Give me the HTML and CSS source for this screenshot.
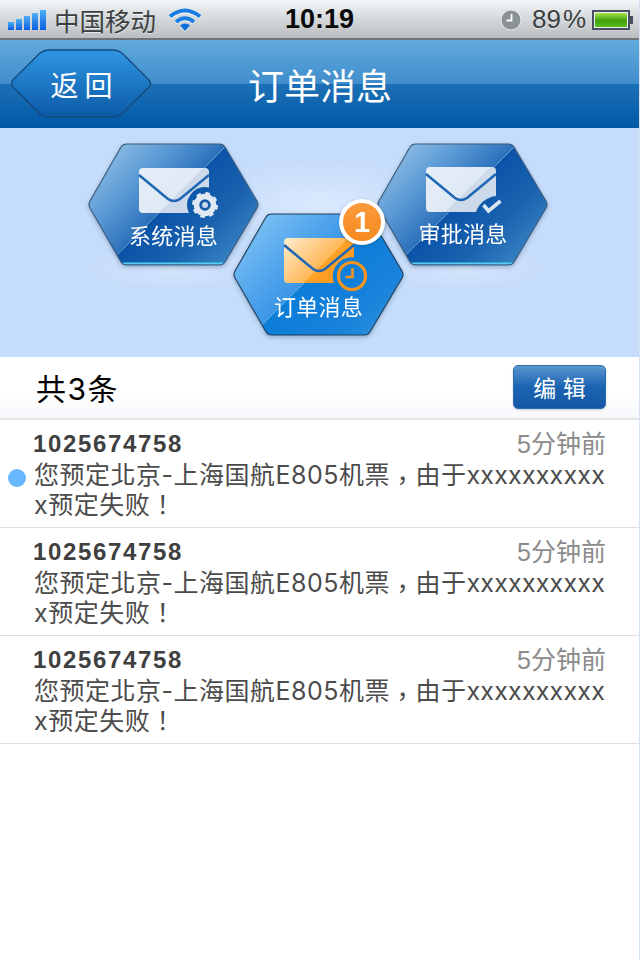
FILE: index.html
```html
<!DOCTYPE html>
<html>
<head>
<meta charset="utf-8">
<title>订单消息</title>
<link rel="stylesheet" href="styles.css">
</head>
<body>
<svg class="defs" width="0" height="0">
  <defs>
    <linearGradient id="hexBlue" gradientUnits="userSpaceOnUse" x1="0" y1="0" x2="141" y2="141">
      <stop offset="0" stop-color="#a5cdea"/>
      <stop offset=".3" stop-color="#5b9ad5"/>
      <stop offset=".5" stop-color="#2c70ba"/>
      <stop offset=".5" stop-color="#0a53a8"/>
      <stop offset=".72" stop-color="#1a62ae"/>
      <stop offset="1" stop-color="#418fcc"/>
    </linearGradient>
    <linearGradient id="hexCyan" gradientUnits="userSpaceOnUse" x1="0" y1="0" x2="141" y2="141">
      <stop offset="0" stop-color="#8ccdf6"/>
      <stop offset=".3" stop-color="#5aaaee"/>
      <stop offset=".5" stop-color="#3a96e6"/>
      <stop offset=".5" stop-color="#0c7ed8"/>
      <stop offset=".75" stop-color="#1580da"/>
      <stop offset="1" stop-color="#2e93df"/>
    </linearGradient>
    <radialGradient id="glowTop" cx=".5" cy="0" r=".5">
      <stop offset="0" stop-color="#62d2ee" stop-opacity=".95"/>
      <stop offset="1" stop-color="#62d2ee" stop-opacity="0"/>
    </radialGradient>
    <radialGradient id="glowBottom" cx=".5" cy="1" r=".5">
      <stop offset="0" stop-color="#1fb8ea" stop-opacity=".9"/>
      <stop offset="1" stop-color="#1fb8ea" stop-opacity="0"/>
    </radialGradient>
    <linearGradient id="mailLight" gradientUnits="userSpaceOnUse" x1="0" y1="0" x2="67" y2="67">
      <stop offset="0" stop-color="#e6eef8"/>
      <stop offset=".5" stop-color="#dfe9f4"/>
      <stop offset=".5" stop-color="#cddaea"/>
      <stop offset="1" stop-color="#c9d8ea"/>
    </linearGradient>
    <linearGradient id="mailOrange" gradientUnits="userSpaceOnUse" x1="0" y1="0" x2="67" y2="67">
      <stop offset="0" stop-color="#ffefd2"/>
      <stop offset=".5" stop-color="#ffb858"/>
      <stop offset=".5" stop-color="#fda22a"/>
      <stop offset="1" stop-color="#fb8a0a"/>
    </linearGradient>
    <linearGradient id="backFill" x1="0" y1="0" x2="0" y2="1">
      <stop offset="0" stop-color="#2f96e3"/>
      <stop offset="1" stop-color="#0c5aa6"/>
    </linearGradient>
    <linearGradient id="battFill" x1="0" y1="0" x2="0" y2="1">
      <stop offset="0" stop-color="#a4e64a"/>
      <stop offset=".55" stop-color="#3f9f0a"/>
      <stop offset="1" stop-color="#57c017"/>
    </linearGradient>
    <linearGradient id="barFill" x1="0" y1="0" x2="0" y2="1">
      <stop offset="0" stop-color="#4fb0f5"/>
      <stop offset="1" stop-color="#0a5fe0"/>
    </linearGradient>
    <path id="hexShape" d="M38.500 1H131.500Q135 1 137 4L169 58Q171 62 169 65L137 119Q135 122 131.500 122H38.500Q35 122 33 119L2 65Q0 62 2 58L33 4Q35 1 38.500 1Z"/>
    <clipPath id="hexClip"><use href="#hexShape"/></clipPath>
  </defs>
</svg>

<header class="status-bar">
  <div class="status-left">
    <svg class="signal" width="40" height="24" viewBox="0 0 40 24">
      <rect x="0" y="14" width="6" height="8" fill="url(#barFill)"/>
      <rect x="8" y="11" width="6" height="11" fill="url(#barFill)"/>
      <rect x="16" y="8" width="6" height="14" fill="url(#barFill)"/>
      <rect x="24" y="5" width="6" height="17" fill="url(#barFill)"/>
      <rect x="32" y="2" width="6" height="20" fill="url(#barFill)"/>
    </svg>
    <span class="carrier">中国移动</span>
    <svg class="wifi" width="34" height="25" viewBox="0 0 34 25">
      <g fill="none" stroke="#1a7de2" stroke-width="4">
        <path d="M2 9.500 Q17 -2.500 32 9.500"/>
        <path d="M8 15 Q17 7.500 26 15"/>
      </g>
      <path d="M12 18.500 Q17 14.500 22 18.500 L17 24 Z" fill="#0f6edb"/>
    </svg>
  </div>
  <span class="clock">10:19</span>
  <div class="status-right">
    <svg class="alarm" width="22" height="22" viewBox="0 0 22 22">
      <circle cx="11" cy="11" r="10" fill="#8b9295" stroke="#e8eaeb" stroke-width="1"/>
      <path d="M11.500 5v6.500H6.500" fill="none" stroke="#fff" stroke-width="1.800"/>
    </svg>
    <span class="battery-text">89<span class="pct">%</span></span>
    <svg class="battery" width="42" height="22" viewBox="0 0 42 22">
      <rect x="1" y="2" width="36" height="18" fill="#eef0f1" stroke="#474f60" stroke-width="2"/>
      <rect x="3" y="4" width="32" height="14" fill="url(#battFill)"/>
      <path d="M38 7h3v8h-3z" fill="#474f60"/>
    </svg>
  </div>
</header>

<nav class="nav-bar">
  <button class="back-btn">
    <svg class="back-shape" width="142" height="70" viewBox="0 0 142 70">
      <path d="M39 1H103Q108 1 112 4L139 31Q142 35 139 38L112 65Q108 68 103 68H39Q34 68 30 65L3 38Q0 35 3 31L30 4Q34 1 39 1Z" fill="url(#backFill)" stroke="#15497c" stroke-width="1.300"/>
    </svg>
    <span class="back-label">返回</span>
  </button>
  <h1 class="nav-title">订单消息</h1>
</nav>

<section class="hex-panel">
  <div class="hex hex-system">
    <svg class="hex-bg" width="172" height="124" viewBox="0 0 172 124">
      <use href="#hexShape" fill="url(#hexBlue)"/>
      <g clip-path="url(#hexClip)">
        <ellipse cx="92" cy="1" rx="62" ry="26" fill="url(#glowTop)"/>
        <ellipse cx="85" cy="122" rx="62" ry="18" fill="url(#glowBottom)"/>
        <path d="M137 4L29 112" stroke="#fff" stroke-opacity=".3" stroke-width="1"/>
        <path d="M32 120.500H138" stroke="#4fd0f4" stroke-width="2"/>
      </g>
      <use href="#hexShape" fill="none" stroke="#3d5e80" stroke-width="1.200"/>
    </svg>
    <svg class="hex-icon" width="100" height="60" viewBox="0 0 100 60">
      <path d="M5 1H67Q71 1 71 5V20.500A18 18 0 0 0 51 46H5Q1 46 1 42V5Q1 1 5 1Z" fill="url(#mailLight)"/>
      <path d="M1 8 L30 32 Q36 36 42 32 L71 8" fill="none" stroke="#1f66b5" stroke-width="2.500"/>
      <circle cx="67" cy="38" r="8.500" fill="none" stroke="#dfe8f3" stroke-width="5.500"/>
      <circle cx="67" cy="38" r="11" fill="none" stroke="#dfe8f3" stroke-width="4" stroke-dasharray="4.300 4.340"/>
      <circle cx="67" cy="38" r="3" fill="#c9d8ea"/>
    </svg>
    <span class="hex-label">系统消息</span>
  </div>

  <div class="hex hex-approve">
    <svg class="hex-bg" width="172" height="124" viewBox="0 0 172 124">
      <use href="#hexShape" fill="url(#hexBlue)"/>
      <g clip-path="url(#hexClip)">
        <ellipse cx="92" cy="1" rx="62" ry="26" fill="url(#glowTop)"/>
        <ellipse cx="85" cy="122" rx="62" ry="18" fill="url(#glowBottom)"/>
        <path d="M137 4L29 112" stroke="#fff" stroke-opacity=".3" stroke-width="1"/>
        <path d="M32 120.500H138" stroke="#4fd0f4" stroke-width="2"/>
      </g>
      <use href="#hexShape" fill="none" stroke="#3d5e80" stroke-width="1.200"/>
    </svg>
    <svg class="hex-icon hex-icon-approve" width="100" height="60" viewBox="0 0 100 60">
      <path d="M5 1H67Q71 1 71 5V30A24 24 0 0 0 51 46H5Q1 46 1 42V5Q1 1 5 1Z" fill="url(#mailLight)"/>
      <path d="M1 8 L30 32 Q36 36 42 32 L71 8" fill="none" stroke="#1f66b5" stroke-width="2.500"/>
      <path d="M58.500 39L63.500 45L75.500 35" fill="none" stroke="#dbe6f3" stroke-width="3.600"/>
    </svg>
    <span class="hex-label">审批消息</span>
  </div>

  <div class="hex hex-order">
    <svg class="hex-bg" width="172" height="124" viewBox="0 0 172 124">
      <use href="#hexShape" fill="url(#hexCyan)"/>
      <g clip-path="url(#hexClip)">
        <ellipse cx="98" cy="1" rx="72" ry="28" fill="url(#glowTop)"/>
        <ellipse cx="92" cy="122" rx="72" ry="22" fill="url(#glowBottom)"/>
        <path d="M137 4L29 112" stroke="#fff" stroke-opacity=".25" stroke-width="1"/>
      </g>
      <use href="#hexShape" fill="none" stroke="#23435f" stroke-width="1.200"/>
    </svg>
    <svg class="hex-icon" width="100" height="60" viewBox="0 0 100 60">
      <path d="M5 1H67Q71 1 71 5V20.500A19 19 0 0 0 51 46H5Q1 46 1 42V5Q1 1 5 1Z" fill="url(#mailOrange)"/>
      <path d="M1 8 L30 32 Q36 36 42 32 L71 8" fill="none" stroke="#1f66b5" stroke-width="2.500"/>
      <circle cx="69" cy="39" r="13.500" fill="none" stroke="#f5941f" stroke-width="3.200"/>
      <path d="M69.500 31v9h-7" fill="none" stroke="#f5941f" stroke-width="2.600"/>
    </svg>
    <span class="hex-label">订单消息</span>
    <span class="badge">1</span>
  </div>
</section>

<div class="toolbar">
  <span class="count">共3条</span>
  <button class="edit-btn">编 辑</button>
</div>

<ul class="msg-list">
  <li class="msg unread">
    <div class="msg-head"><span class="msg-id">1025674758</span><span class="msg-time">5分钟前</span></div>
    <p class="msg-text" lang="zh-TW">您预定北京-上海国航E805机票<span class="comma">，</span>由于<span class="tight">xxxxxxxxxx</span>x预定失败！</p>
  </li>
  <li class="msg">
    <div class="msg-head"><span class="msg-id">1025674758</span><span class="msg-time">5分钟前</span></div>
    <p class="msg-text" lang="zh-TW">您预定北京-上海国航E805机票<span class="comma">，</span>由于<span class="tight">xxxxxxxxxx</span>x预定失败！</p>
  </li>
  <li class="msg">
    <div class="msg-head"><span class="msg-id">1025674758</span><span class="msg-time">5分钟前</span></div>
    <p class="msg-text" lang="zh-TW">您预定北京-上海国航E805机票<span class="comma">，</span>由于<span class="tight">xxxxxxxxxx</span>x预定失败！</p>
  </li>
</ul>
</body>
</html>
```
FILE: styles.css
```css
* { box-sizing: border-box; }
html, body { margin: 0; padding: 0; }
body {
  width: 640px;
  height: 960px;
  overflow: hidden;
  background: #fff;
  font-family: "Liberation Sans", "Noto Sans CJK SC", sans-serif;
  border-right: 1px solid #d5e2f2;
}
.defs { position: absolute; }
svg { display: block; }

.status-bar {
  position: relative;
  height: 40px;
  width: 640px;
  display: flex;
  justify-content: space-between;
  align-items: center;
  padding: 1px 6px 0 8px;
  background: linear-gradient(#f1f5f7, #b9bdc0);
  border-bottom: 2px solid #6f7275;
}
.status-left { display: flex; align-items: center; }
.carrier {
  margin-left: 6px;
  font-size: 25.500px;
  color: #3c3f41;
  text-shadow: 0 1px 0 rgba(255, 255, 255, .6);
}
.wifi { margin-left: 12px; filter: drop-shadow(0 1px 0 rgba(255, 255, 255, .8)); }
.clock {
  position: absolute;
  left: 285px;
  top: 3px;
  font-size: 27px;
  line-height: 32px;
  font-weight: bold;
  color: #0a0a0a;
}
.status-right { display: flex; align-items: center; }
.battery-text {
  margin-left: 10px;
  font-size: 26px;
  color: #3c3f41;
  text-shadow: 0 1px 0 rgba(255, 255, 255, .6);
}
.pct { margin-left: 2px; }
.battery { margin-left: 6px; }

.nav-bar {
  position: relative;
  width: 640px;
  height: 88px;
  display: flex;
  align-items: center;
  justify-content: center;
  background: linear-gradient(#62aade 0, #3f8dcb 44px, #1b70b6 44px, #0358a7 88px);
}
.back-btn {
  position: absolute;
  left: 10px;
  top: 9px;
  width: 142px;
  height: 70px;
  padding: 0;
  border: 0;
  background: none;
  font-family: inherit;
}
.back-shape { position: absolute; left: 0; top: 0; }
.back-label {
  position: relative;
  font-size: 28px;
  letter-spacing: 6px;
  margin-left: 7px;
  color: #fff;
}
.nav-title {
  margin: 0;
  font-size: 36px;
  font-weight: 400;
  color: #fff;
}

.hex-panel {
  position: relative;
  width: 640px;
  height: 229px;
  background-color: #c5dcfa;
  background-image:
    radial-gradient(ellipse 120px 45px at 320px 75px, #dbe9fd 0, rgba(197, 220, 250, 0) 100%),
    radial-gradient(ellipse 85px 22px at 173px 140px, #d6e6fd 0, rgba(197, 220, 250, 0) 100%),
    radial-gradient(ellipse 85px 22px at 462px 140px, #d6e6fd 0, rgba(197, 220, 250, 0) 100%);
}
.hex { position: absolute; width: 172px; height: 124px; filter: drop-shadow(0 2px 2px rgba(30, 60, 100, .3)); }
.hex-system { left: 88px; top: 15px; }
.hex-approve { left: 377px; top: 15px; }
.hex-order { left: 233px; top: 85px; }
.hex-bg { position: absolute; left: 0; top: 0; }
.hex-icon { position: absolute; left: 50px; top: 24px; }
.hex-icon-approve { left: 48px; top: 23px; }
.hex-label {
  position: absolute;
  left: 0;
  right: 0;
  top: 79px;
  padding-right: 1px;
  text-align: center;
  font-size: 22px;
  letter-spacing: .3px;
  line-height: 30px;
  color: #fff;
}
.hex-approve .hex-label { top: 77px; padding-right: 0; }
.hex-order .hex-label { top: 80px; }
.badge {
  position: absolute;
  left: 106px;
  top: -14px;
  width: 46px;
  height: 46px;
  border: 4px solid #fff;
  border-radius: 50%;
  background: linear-gradient(#fb9a3c, #f58a20);
  box-shadow: 0 1px 2px rgba(30, 60, 100, .4);
  color: #fff;
  font-size: 29px;
  font-weight: bold;
  line-height: 38px;
  text-align: center;
}

.toolbar {
  height: 63px;
  width: 640px;
  display: flex;
  align-items: center;
  justify-content: space-between;
  padding: 0 34px 1px 36px;
  background: linear-gradient(#fff 60%, #f6f8fb);
  border-bottom: 2px solid #e1e3e6;
}
.count { font-family: Inter, "Noto Sans CJK SC", sans-serif; font-size: 30px; letter-spacing: 1.500px; color: #000; }
.edit-btn {
  width: 93px;
  height: 44px;
  padding: 0;
  border: 1px solid #2c6bb0;
  border-radius: 5px;
  background: linear-gradient(#5c96ce, #1a63b0 50%, #1558a8);
  box-shadow: 0 1px 2px rgba(30, 60, 100, .25);
  color: #fff;
  font-family: inherit;
  font-size: 23px;
}

.msg-list { margin: 0; padding: 0; list-style: none; }
.msg {
  position: relative;
  height: 108px;
  padding: 10px 30px 0 34px;
  border-bottom: 1px solid #dcdee0;
}
.msg.unread::before {
  content: "";
  position: absolute;
  left: 8px;
  top: 49px;
  width: 18px;
  height: 18px;
  border-radius: 50%;
  background: #68b8ff;
}
.msg-head {
  display: flex;
  justify-content: space-between;
  align-items: center;
  height: 28px;
  margin-right: 3px;
}
.msg-id { margin-left: -1px; font-size: 24px; font-weight: bold; color: #404040; letter-spacing: 1.660px; }
.msg-time { font-size: 25px; color: #8a8a8a; margin-top: -4px; }
.msg-text {
  margin: 2px 0 0;
  font-family: Inter, "Noto Sans CJK TC", sans-serif;
  font-size: 25px;
  letter-spacing: .5px;
  line-height: 30px;
  color: #4c4c4c;
  word-break: break-all;
}
.tight { letter-spacing: .2px; }
.comma { line-height: 0; vertical-align: -6px; }
```
